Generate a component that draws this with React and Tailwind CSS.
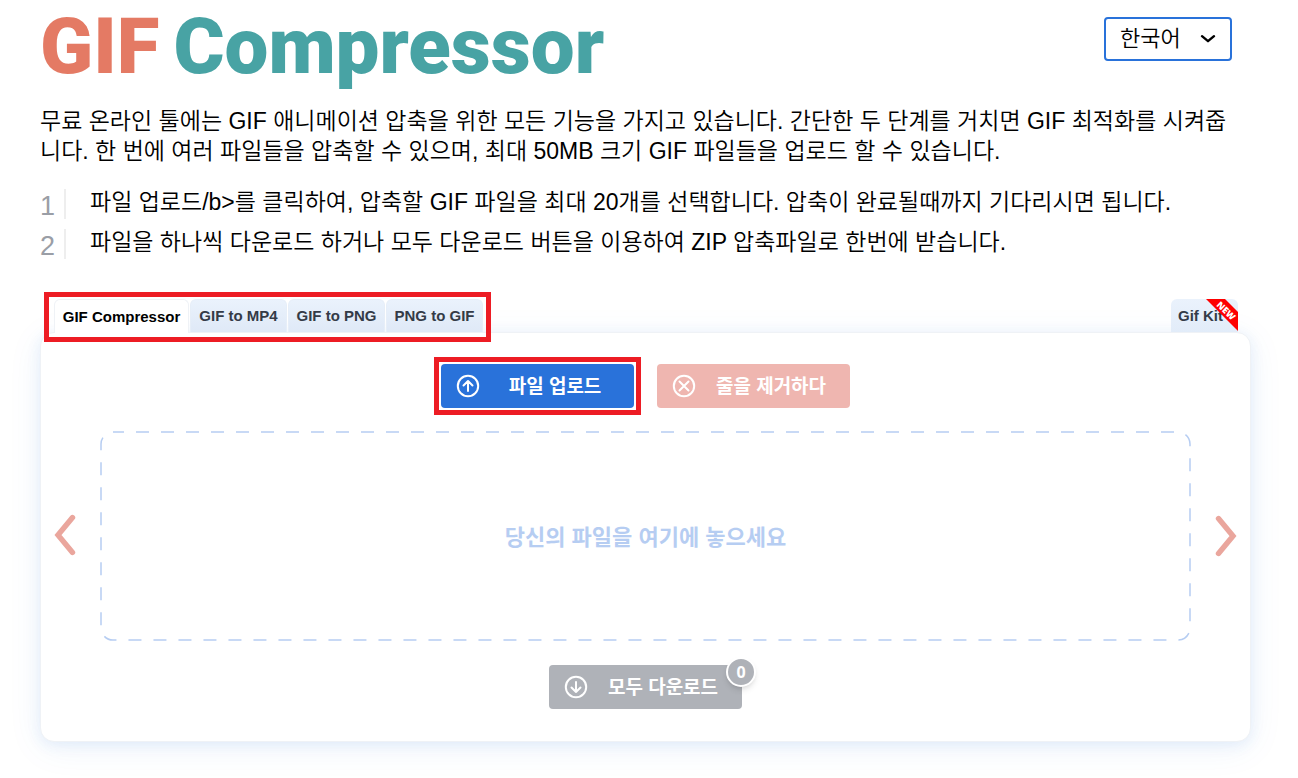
import clsx from 'clsx';

const tabs = [
  { label: 'GIF Compressor', active: true },
  { label: 'GIF to MP4' },
  { label: 'GIF to PNG' },
  { label: 'PNG to GIF' },
];

const steps = [
  '파일 업로드/b>를 클릭하여, 압축할 GIF 파일을 최대 20개를 선택합니다. 압축이 완료될때까지 기다리시면 됩니다.',
  '파일을 하나씩 다운로드 하거나 모두 다운로드 버튼을 이용하여 ZIP 압축파일로 한번에 받습니다.',
];

const iconPaths = {
  up: 'M12 17V7M7.5 11.5L12 7l4.5 4.5',
  down: 'M12 7v10M7.5 12.5L12 17l4.5-4.5',
  cross: 'M7.5 7.5l9 9M16.5 7.5l-9 9',
};

function CircleIcon({ name }) {
  return (
    <svg
      viewBox="0 0 24 24"
      className="h-6 w-6 shrink-0"
      fill="none"
      stroke="currentColor"
      strokeWidth="2"
      strokeLinecap="round"
      strokeLinejoin="round"
      aria-hidden="true"
    >
      <circle cx="12" cy="12" r="10.2" />
      <path d={iconPaths[name]} />
    </svg>
  );
}

function ActionButton({ icon, className, children }) {
  return (
    <button
      type="button"
      className={clsx(
        'flex h-11 w-[193px] items-center rounded pl-[15px] pr-4 text-[19px] leading-6 font-bold text-white',
        className
      )}
    >
      <CircleIcon name={icon} />
      <span className="flex-1 pt-px pl-3 text-center whitespace-nowrap">{children}</span>
    </button>
  );
}

function LanguageSelect() {
  return (
    <div className="relative">
      <select
        aria-label="언어"
        className="h-11 w-32 appearance-none rounded border-2 border-[#2972da] bg-white pl-[14px] text-[22px] leading-8 font-[350] text-black"
      >
        <option>한국어</option>
      </select>
      <svg
        viewBox="0 0 16 10"
        className="pointer-events-none absolute top-[17px] right-4 h-[10px] w-4"
        fill="none"
        stroke="black"
        strokeWidth="2.4"
        strokeLinecap="round"
        strokeLinejoin="round"
        aria-hidden="true"
      >
        <path d="M2 2.2l6 5 6-5" />
      </svg>
    </div>
  );
}

function Tabs() {
  return (
    <div className="relative z-10 flex justify-between pr-[13px] pl-[14px] font-['Liberation_Sans',Arial,sans-serif] text-[15px] leading-5 font-bold">
      <nav className="relative flex gap-px">
        {tabs.map((tab) => (
          <a
            key={tab.label}
            href="#"
            className={clsx(
              'flex items-center justify-center rounded-t-md border border-b-0 whitespace-nowrap',
              tab.active
                ? '-mb-px h-[34px] w-[135px] border-[#eff2f6] bg-white text-black'
                : 'h-[33px] w-[97px] border-[#e6eef8] bg-linear-to-b from-[#eaf2fc] to-[#dfe9f7] text-[#343b47]'
            )}
          >
            {tab.label}
          </a>
        ))}
        <span className="pointer-events-none absolute -top-[7px] -right-2 -bottom-[10px] -left-[10px] border-[5px] border-[#ed1c24]" />
      </nav>
      <a
        href="#"
        className="relative flex h-[33px] w-[67px] items-center rounded-t-md bg-linear-to-b from-[#eaf2fc] to-[#e2ecf9] pl-[7px] whitespace-nowrap text-[#343b47]"
      >
        Gif Kit
        <svg viewBox="0 0 32 32" className="absolute top-0 right-0 h-8 w-8 overflow-visible">
          <path d="M0 0h19l13 13v19z" fill="#fe0000" />
          <text
            x="20"
            y="15"
            transform="rotate(44 20 12)"
            textAnchor="middle"
            fill="white"
            className="font-['Open_Sans',sans-serif] text-[9px] leading-none font-extrabold"
          >
            NEW
          </text>
        </svg>
      </a>
    </div>
  );
}

function SlideArrow({ label, path, className }) {
  return (
    <button type="button" aria-label={label} className="flex w-[60px] justify-center">
      <svg
        viewBox="0 0 24 44"
        className={clsx('h-11 w-6', className)}
        fill="none"
        stroke="#eaa69d"
        strokeWidth="5.4"
        strokeLinecap="round"
        aria-hidden="true"
      >
        <path d={path} />
      </svg>
    </button>
  );
}

function DropZone() {
  return (
    <div className="mt-6 flex items-center">
      <SlideArrow label="이전" className="mr-[10px]" path="M18.5 3.5L4 21l14.5 17.5" />
      <div className="relative flex h-52 flex-1 items-center justify-center">
        <svg className="absolute inset-0 h-full w-full" overflow="visible" aria-hidden="true">
          <rect
            width="100%"
            height="100%"
            rx="12"
            fill="none"
            stroke="#b6cdf2"
            strokeWidth="1.5"
            strokeDasharray="13 12"
            strokeDashoffset="2"
          />
        </svg>
        <p className="pt-1 text-[22px] leading-8 font-bold text-[#b6cdf2]">당신의 파일을 여기에 놓으세요</p>
      </div>
      <SlideArrow label="다음" className="ml-[10px]" path="M5.5 4.5L20 22 5.5 39.5" />
    </div>
  );
}

function App() {
  return (
    <div className="min-h-screen overflow-x-hidden bg-white pb-9 pr-[47px] pl-10 font-['Liberation_Sans','Noto_Sans_CJK_KR',sans-serif] text-black">
      <header className="flex items-start justify-between pt-[17px] pr-[19px]">
        <h1 className="flex gap-[14px] font-['Roboto',sans-serif] text-[78px] leading-[60px] font-black whitespace-nowrap text-[#48a3a4]">
          <span className="text-[#e47a64]">GIF</span>
          <span>Compressor</span>
        </h1>
        <LanguageSelect />
      </header>

      <p className="mt-[29px] pr-5 text-[23px] leading-[30px] font-[350]">
        무료 온라인 툴에는 GIF 애니메이션 압축을 위한 모든 기능을 가지고 있습니다. 간단한 두 단계를 거치면
        GIF 최적화를 시켜줍니다. 한 번에 여러 파일들을 압축할 수 있으며, 최대 50MB 크기 GIF 파일들을 업로드 할
        수 있습니다.
      </p>

      <ol className="mt-[23px] flex flex-col gap-[10px]">
        {steps.map((step, index) => (
          <li key={step} className="flex h-[30px] items-center">
            <span className="h-[30px] w-[26px] border-r-2 border-[#eeeeee] pt-0.5 text-[27px] leading-[30px] text-[#9a9ea6]">
              {index + 1}
            </span>
            <span className="-mt-1 pl-6 text-[23px] leading-[30px] font-[350]">{step}</span>
          </li>
        ))}
      </ol>

      <section className="mt-10">
        <Tabs />
        <main className="rounded-[14px] border border-[#eff2f6] bg-white pt-[31px] pb-8 shadow-[0_3px_14px_rgba(41,114,218,0.1),0_6px_36px_rgba(41,114,218,0.07)]">
          <div className="flex justify-center gap-[23px]">
            <div className="relative">
              <ActionButton icon="up" className="bg-[#2972da]">
                파일 업로드
              </ActionButton>
              <span className="pointer-events-none absolute -inset-[7px] border-[5px] border-[#ed1c24]" />
            </div>
            <ActionButton icon="cross" className="bg-[#efb6b0]">
              줄을 제거하다
            </ActionButton>
          </div>
          <DropZone />
          <div className="mt-[25px] flex justify-center">
            <div className="relative">
              <ActionButton icon="down" className="bg-[#afb2b8]">
                모두 다운로드
              </ActionButton>
              <span className="absolute -top-2 -right-[14px] flex h-[30px] w-[30px] items-center justify-center rounded-full border-2 border-white bg-[#afb2b8] font-['Open_Sans',sans-serif] text-base leading-5 font-bold text-white shadow-md">
                0
              </span>
            </div>
          </div>
        </main>
      </section>
    </div>
  );
}

export default App;
